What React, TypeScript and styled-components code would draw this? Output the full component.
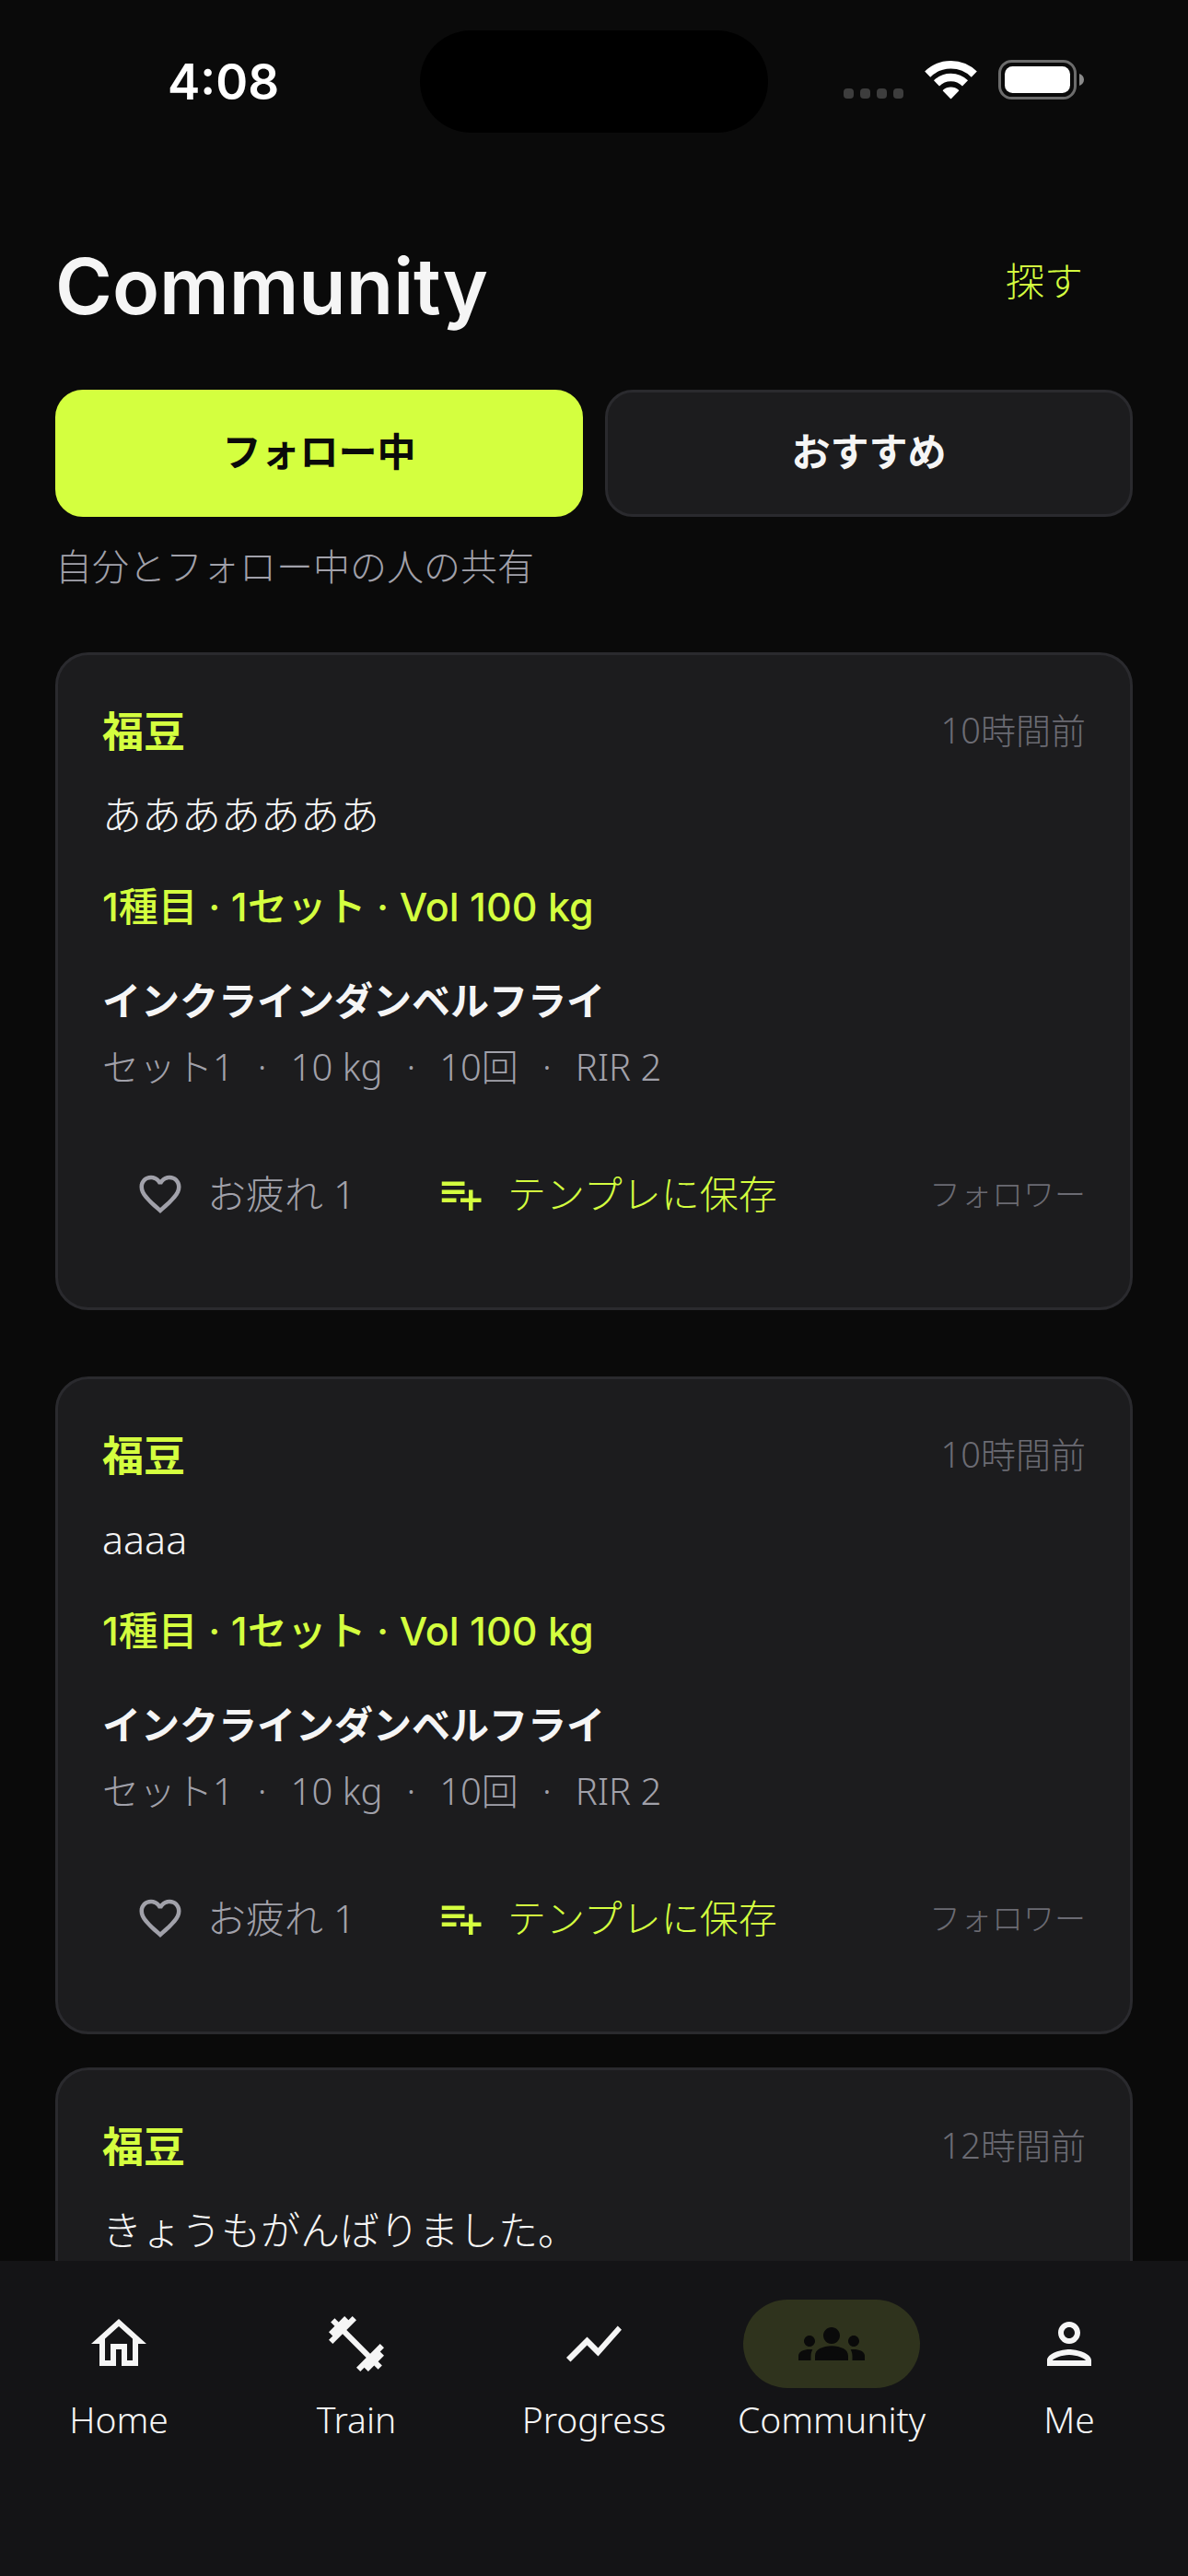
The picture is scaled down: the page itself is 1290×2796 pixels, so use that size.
import React, { Fragment, useState } from "react";
import styled, { createGlobalStyle, css } from "styled-components";

const color = {
  page: "#0a0a0a",
  surface: "#1c1c1e",
  nav: "#141416",
  line: "#2a2a2e",
  lime: "#d4ff3f",
  limeDim: "#2f331d",
  text: "#f5f5f5",
  muted: "#a1a1aa",
  dim: "#6b6b73",
};

const bodyFont = `"Noto Sans", "Noto Sans CJK JP", sans-serif`;
const displayFont = `Inter, "Noto Sans CJK JP", sans-serif`;

const GlobalStyle = createGlobalStyle`
  * { box-sizing: border-box; }
  body { margin: 0; background: ${color.page}; }
  button { font: inherit; color: inherit; background: none; border: 0; padding: 0; cursor: pointer; }
  h1, h2, h3, p { margin: 0; }
`;

const Screen = styled.div`
  display: flex;
  flex-direction: column;
  height: 100vh;
  overflow: hidden;
  background: ${color.page};
  color: ${color.text};
  font-family: ${bodyFont};
  font-weight: 300;
`;

const StatusBar = styled.div`
  flex: none;
  display: grid;
  grid-template-columns: 1fr auto 1fr;
  align-items: center;
  height: 177px;
`;

const Clock = styled.time`
  padding-left: 182px;
  font: 600 53px/64px ${displayFont};
  color: #fff;
`;

const Island = styled.div`
  width: 378px;
  height: 111px;
  border-radius: 56px;
  background: #000;
`;

const StatusIcons = styled.div`
  display: flex;
  justify-content: flex-end;
  align-items: flex-end;
  gap: 23px;
  padding: 0 113px 4px 0;

  svg { display: block; }
`;

const Header = styled.header`
  flex: none;
  display: flex;
  justify-content: space-between;
  align-items: flex-start;
  margin-top: 74px;
  padding: 0 60px;
`;

const Title = styled.h1`
  font: 600 84px/120px ${displayFont};
`;

const FindButton = styled.button`
  height: 108px;
  padding: 0 54px;
  font-size: 42px;
  line-height: 60px;
  color: ${color.lime};
`;

const Tabs = styled.div`
  flex: none;
  display: flex;
  gap: 24px;
  margin-top: 52px;
  padding: 0 60px;
`;

const Tab = styled.button<{ $active: boolean }>`
  flex: 1;
  height: 138px;
  padding-bottom: 4px;
  border-radius: 30px;
  border: 3px solid ${(p) => (p.$active ? color.lime : color.line)};
  background: ${(p) => (p.$active ? color.lime : color.surface)};
  color: ${(p) => (p.$active ? color.page : color.text)};
  font-size: 42px;
  font-weight: 600;
  line-height: 60px;
`;

const Hint = styled.p`
  flex: none;
  margin-top: 24px;
  padding: 0 60px;
  font-size: 40px;
  line-height: 60px;
  color: ${color.muted};
`;

const Feed = styled.main`
  flex: 1;
  min-height: 0;
  overflow-y: auto;
  scrollbar-width: none;
  margin-top: 63px;
  padding: 0 60px;
`;

const Card = styled.article<{ $gap: number }>`
  margin-bottom: ${(p) => p.$gap}px;
  padding: 51px 48px;
  border: 3px solid ${color.line};
  border-radius: 36px;
  background: ${color.surface};
`;

const CardHead = styled.div`
  display: flex;
  justify-content: space-between;
  align-items: flex-start;
  height: 66px;
`;

const Author = styled.h2`
  font: 700 45px/66px ${displayFont};
  color: ${color.lime};
`;

const When = styled.time`
  font-size: 38px;
  line-height: 60px;
  color: ${color.dim};
`;

const Message = styled.p`
  margin-top: 27px;
  font-size: 43px;
  line-height: 60px;
`;

const Summary = styled.p`
  margin-top: 39px;
  font: 500 43px/60px ${displayFont};
  color: ${color.lime};
`;

const Exercise = styled.h3`
  margin-top: 42px;
  font-size: 42px;
  font-weight: 600;
  line-height: 60px;
`;

const SetLine = styled.p`
  display: flex;
  gap: 26px;
  margin-top: 12px;
  font-size: 40px;
  line-height: 60px;
  color: ${color.muted};
`;

const Actions = styled.div`
  display: flex;
  align-items: center;
  gap: 15px;
  height: 144px;
  margin-top: 36px;
`;

const Action = styled.button<{ $accent?: boolean }>`
  display: flex;
  align-items: center;
  gap: 24px;
  height: 120px;
  padding: 0 36px;
  font-size: 42px;
  line-height: 60px;
  color: ${(p) => (p.$accent ? color.lime : color.muted)};
`;

const Audience = styled.span`
  margin-left: auto;
  font-size: 34px;
  line-height: 60px;
  color: ${color.dim};
`;

const Nav = styled.nav`
  flex: none;
  display: flex;
  height: 342px;
  padding-top: 42px;
  background: ${color.nav};
`;

const NavItem = styled.button`
  flex: 1;
  display: flex;
  flex-direction: column;
  align-items: center;
  justify-content: flex-start;
  gap: 4px;
  font-size: 39px;
  line-height: 60px;
`;

const Indicator = styled.span<{ $active: boolean }>`
  display: flex;
  align-items: center;
  justify-content: center;
  width: 192px;
  height: 96px;
  border-radius: 48px;
  ${(p) =>
    p.$active &&
    css`
      background: ${color.limeDim};
      color: ${color.page};
    `}
`;

const Icon = ({ d, size = 54 }: { d: string; size?: number }) => (
  <svg width={size} height={size} viewBox="0 0 24 24" fill="currentColor" aria-hidden="true">
    <path d={d} />
  </svg>
);

const icons = {
  heart:
    "M16.5 3c-1.74 0-3.41.81-4.5 2.09C10.91 3.81 9.24 3 7.5 3 4.42 3 2 5.42 2 8.5c0 3.78 3.4 6.86 8.55 11.54L12 21.35l1.45-1.32C18.6 15.36 22 12.28 22 8.5 22 5.42 19.58 3 16.5 3zm-4.4 15.55l-.1.1-.1-.1C7.14 14.24 4 11.39 4 8.5 4 6.5 5.5 5 7.5 5c1.54 0 3.04.99 3.57 2.36h1.87C13.46 5.99 14.96 5 16.5 5c2 0 3.5 1.5 3.5 3.5 0 2.89-3.14 5.74-7.9 10.05z",
  playlistAdd:
    "M14 10H3v2h11v-2zm0-4H3v2h11V6zm4 8v-4h-2v4h-4v2h4v4h2v-4h4v-2h-4zM3 16h7v-2H3v2z",
  home: "M12 5.69l5 4.5V18h-2v-6H9v6H7v-7.81l5-4.5M12 3L2 12h3v8h6v-6h2v6h6v-8h3L12 3z",
  train:
    "M20.57 14.86L22 13.43 20.57 12 17 15.57 8.43 7 12 3.43 10.57 2 9.14 3.43 7.71 2 5.57 4.14 4.14 2.71 2.71 4.14l1.43 1.43L2 7.71l1.43 1.43L2 10.57 3.43 12 7 8.43 15.57 17 12 20.57 13.43 22l1.43-1.43L16.29 22l2.14-2.14 1.43 1.43 1.43-1.43-1.43-1.43L22 16.29z",
  progress: "M3.5 18.49l6-6.01 4 4L22 6.92l-1.41-1.41-7.09 7.97-4-4L2 16.99z",
  community:
    "M12 12.75c1.63 0 3.07.39 4.24.9 1.08.48 1.76 1.56 1.76 2.73V18H6v-1.61c0-1.18.68-2.26 1.76-2.73 1.17-.52 2.61-.91 4.24-.91zM4 13c1.1 0 2-.9 2-2s-.9-2-2-2-2 .9-2 2 .9 2 2 2zm1.13 1.1c-.37-.06-.74-.1-1.13-.1-.99 0-1.93.21-2.78.58C.48 14.9 0 15.62 0 16.43V18h4.5v-1.61c0-.83.23-1.61.63-2.29zM20 13c1.1 0 2-.9 2-2s-.9-2-2-2-2 .9-2 2 .9 2 2 2zm4 3.43c0-.81-.48-1.53-1.22-1.85-.85-.37-1.79-.58-2.78-.58-.39 0-.76.04-1.13.1.4.68.63 1.46.63 2.29V18H24v-1.57zM12 6c1.66 0 3 1.34 3 3s-1.34 3-3 3-3-1.34-3-3 1.34-3 3-3z",
  me: "M12 6c1.1 0 2 .9 2 2s-.9 2-2 2-2-.9-2-2 .9-2 2-2m0 10c2.7 0 5.8 1.29 6 2H6c.23-.72 3.31-2 6-2m0-12C9.79 4 8 5.79 8 8s1.79 4 4 4 4-1.79 4-4-1.79-4-4-4zm0 10c-2.67 0-8 1.34-8 4v2h16v-2c0-2.66-5.33-4-8-4z",
};

const Signal = () => (
  <svg width="65" height="12" viewBox="0 0 65 12" fill="#3d3d3d" aria-hidden="true">
    {[0, 18, 36, 54].map((x) => (
      <rect key={x} x={x} y="0" width="11" height="11" rx="4" />
    ))}
  </svg>
);

const Wifi = () => (
  <svg width="57" height="43" viewBox="0 0 57 43" aria-hidden="true">
    <g fill="none" stroke="#fff" strokeWidth="8.6">
      <path d="M3.2 15.6a36 36 0 0 1 50.6 0" />
      <path d="M13 25.4a22 22 0 0 1 31 0" />
    </g>
    <path
      d="M20.5 33.2a12 12 0 0 1 16 0L28.5 41.5z"
      fill="#fff"
      stroke="#fff"
      strokeWidth="1.5"
      strokeLinejoin="round"
    />
  </svg>
);

const Battery = () => (
  <svg width="93" height="43" viewBox="0 0 93 43" aria-hidden="true">
    <rect x="1.5" y="1.5" width="82" height="40" rx="13" fill="none" stroke="#6c6c6c" strokeWidth="3" />
    <rect x="7" y="7" width="71" height="29" rx="8.5" fill="#fff" />
    <path d="M88 15c3 1 5 3.4 5 6.5s-2 5.5-5 6.5z" fill="#8a8a8a" />
  </svg>
);

interface Workout {
  summary: string;
  exercise: string;
  sets: string[];
  likes: number;
  audience: string;
}

interface Post {
  id: number;
  author: string;
  when: string;
  message: string;
  gap: number;
  workout?: Workout;
}

const workout: Workout = {
  summary: "1種目 · 1セット · Vol 100 kg",
  exercise: "インクラインダンベルフライ",
  sets: ["セット1", "10 kg", "10回", "RIR 2"],
  likes: 1,
  audience: "フォロワー",
};

const posts: Post[] = [
  { id: 1, author: "福豆", when: "10時間前", message: "あああああああ", gap: 72, workout },
  { id: 2, author: "福豆", when: "10時間前", message: "aaaa", gap: 36, workout },
  { id: 3, author: "福豆", when: "12時間前", message: "きょうもがんばりました。", gap: 36 },
];

const navItems = [
  { label: "Home", icon: icons.home },
  { label: "Train", icon: icons.train },
  { label: "Progress", icon: icons.progress },
  { label: "Community", icon: icons.community },
  { label: "Me", icon: icons.me },
];

const PostCard = ({ post }: { post: Post }) => (
  <Card $gap={post.gap}>
    <CardHead>
      <Author>{post.author}</Author>
      <When>{post.when}</When>
    </CardHead>
    <Message>{post.message}</Message>
    {post.workout && (
      <>
        <Summary>{post.workout.summary}</Summary>
        <Exercise>{post.workout.exercise}</Exercise>
        <SetLine>
          {post.workout.sets.map((part, i) => (
            <Fragment key={part}>
              {i > 0 && <span>·</span>}
              <span>{part}</span>
            </Fragment>
          ))}
        </SetLine>
        <Actions>
          <Action type="button">
            <Icon d={icons.heart} />
            お疲れ {post.workout.likes}
          </Action>
          <Action type="button" $accent>
            <Icon d={icons.playlistAdd} />
            テンプレに保存
          </Action>
          <Audience>{post.workout.audience}</Audience>
        </Actions>
      </>
    )}
  </Card>
);

export default function App() {
  const [tab, setTab] = useState("フォロー中");
  const [section, setSection] = useState("Community");

  return (
    <Screen lang="ja">
      <GlobalStyle />
      <StatusBar>
        <Clock>4:08</Clock>
        <Island />
        <StatusIcons>
          <Signal />
          <Wifi />
          <Battery />
        </StatusIcons>
      </StatusBar>
      <Header>
        <Title>Community</Title>
        <FindButton type="button">探す</FindButton>
      </Header>
      <Tabs>
        {["フォロー中", "おすすめ"].map((name) => (
          <Tab key={name} type="button" $active={tab === name} aria-pressed={tab === name} onClick={() => setTab(name)}>
            {name}
          </Tab>
        ))}
      </Tabs>
      <Hint>自分とフォロー中の人の共有</Hint>
      <Feed>
        {posts.map((post) => (
          <PostCard key={post.id} post={post} />
        ))}
      </Feed>
      <Nav>
        {navItems.map((item) => (
          <NavItem key={item.label} type="button" onClick={() => setSection(item.label)}>
            <Indicator $active={section === item.label}>
              <Icon d={item.icon} size={72} />
            </Indicator>
            {item.label}
          </NavItem>
        ))}
      </Nav>
    </Screen>
  );
}
